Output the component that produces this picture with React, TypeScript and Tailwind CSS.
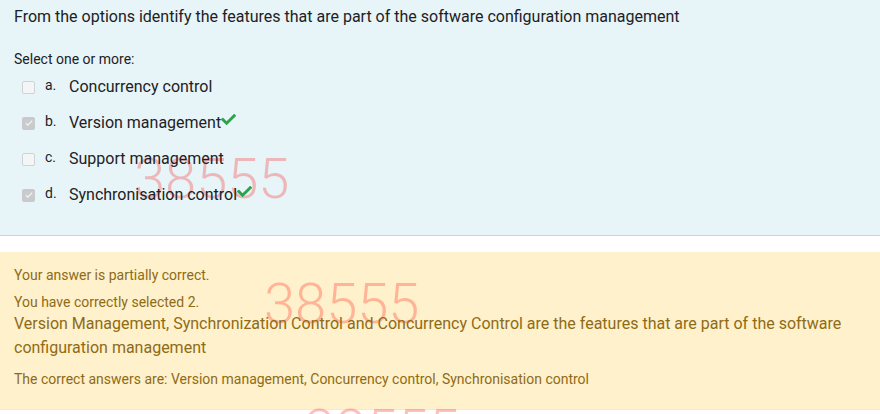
import React from "react";

type Option = { letter: string; label: string; checked: boolean; correct: boolean };

const options: Option[] = [
  { letter: "a.", label: "Concurrency control", checked: false, correct: false },
  { letter: "b.", label: "Version management", checked: true, correct: true },
  { letter: "c.", label: "Support management", checked: false, correct: false },
  { letter: "d.", label: "Synchronisation control", checked: true, correct: true },
];

function Checkbox({ checked }: { checked: boolean }) {
  if (checked) {
    return (
      <span className="flex h-[13px] w-[13px] items-center justify-center rounded-[2px] bg-[#c9cacb]">
        <svg viewBox="0 0 16 16" className="h-[10px] w-[10px]">
          <path d="M3 8.5l3 3 7-7" fill="none" stroke="#eef0f1" strokeWidth="2.2" />
        </svg>
      </span>
    );
  }
  return <span className="h-[13px] w-[13px] rounded-[2px] border border-[#cfd3d5] bg-[#f3f5f6]" />;
}

function GreenCheck() {
  return (
    <svg viewBox="0 0 512 512" className="mt-[7px] h-[15px] w-[15px] self-start">
      <path
        fill="#2aa44a"
        d="M173.898 439.404l-166.4-166.4c-9.997-9.997-9.997-26.206 0-36.204l36.203-36.204c9.997-9.998 26.207-9.998 36.204 0L192 312.69 432.095 72.596c9.997-9.997 26.207-9.997 36.204 0l36.203 36.204c9.997 9.997 9.997 26.206 0 36.204l-294.4 294.401c-9.998 9.997-26.207 9.997-36.204-.001z"
      />
    </svg>
  );
}

function Watermark({ className }: { className: string }) {
  return (
    <div
      className={`pointer-events-none absolute z-0 text-[56px] font-light leading-[56px] text-[rgba(255,0,0,0.25)] ${className}`}
    >
      38555
    </div>
  );
}

export default function App() {
  return (
    <div className="relative h-[414px] w-[880px] overflow-hidden bg-white font-['Roboto',sans-serif]">
      <div className="h-[236px] border-b border-[#b8dce2] bg-[#e7f5f8] px-[14px] pt-[5px]">
        <div className="relative z-10 text-[#1d2125]">
          <p className="text-[16px] leading-6">
            From the options identify the features that are part of the software configuration management
          </p>
          <p className="mt-[21px] text-[14px] leading-[19px]">Select one or more:</p>
          <div className="pl-[8px]">
            {options.map((o) => (
              <div key={o.letter} className="flex h-9 items-center">
                <Checkbox checked={o.checked} />
                <span className="mb-[4px] ml-[10px] w-[24px] text-[14px] leading-6">{o.letter}</span>
                <span className="text-[16px] leading-6">{o.label}</span>
                {o.correct && <GreenCheck />}
              </div>
            ))}
          </div>
        </div>
      </div>

      <div className="mt-4 h-[158px] border-b border-[#fbe8c4] bg-[#fff1cb] px-[14px] pt-[13px]">
        <div className="relative z-10 text-[#8e6b16]">
          <p className="text-[14px] leading-[21px]">Your answer is partially correct.</p>
          <p className="mt-[6px] text-[14px] leading-[20px]">You have correctly selected 2.</p>
          <p className="text-[16px] leading-6">
            Version Management, Synchronization Control and Concurrency Control are the features that are part of the
            software configuration management
          </p>
          <p className="mt-[9px] text-[14px] leading-[21px]">
            The correct answers are: Version management, Concurrency control, Synchronisation control
          </p>
        </div>
      </div>

      <Watermark className="left-[134px] top-[151px]" />
      <Watermark className="left-[264px] top-[276px]" />
      <Watermark className="left-[304px] top-[402px]" />
    </div>
  );
}
